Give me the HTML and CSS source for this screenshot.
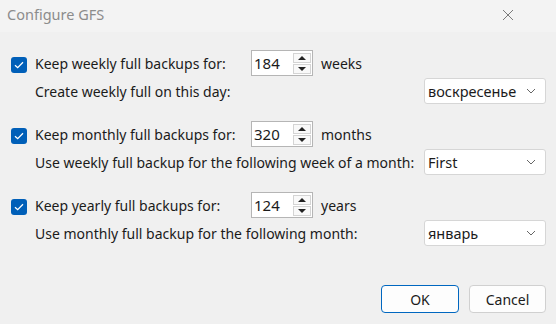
FILE: index.html
```html
<!DOCTYPE html>
<html lang="en">
<head>
    <meta charset="UTF-8">
    <title>Configure GFS</title>
    <link rel="stylesheet" href="styles.css">
</head>
<body>
    <div class="titlebar">
        <span class="title">Configure GFS</span>
        <svg class="close" width="12" height="12" viewBox="0 0 12 12">
            <path d="M1 1 L11 11 M11 1 L1 11" stroke="#7a7a7a" stroke-width="1" fill="none"/>
        </svg>
    </div>

    <main class="content">
        <section class="group">
            <div class="row keep">
                <label class="check">
                    <span class="box"><svg width="10" height="8" viewBox="0 0 10 8"><path d="M1 4.2 L3.7 6.7 L9 1.3" stroke="#fff" stroke-width="1.3" fill="none"/></svg></span>
                    <span class="label">Keep weekly full backups for:</span>
                </label>
                <div class="spin">
                    <span class="value">184</span>
                    <div class="arrows"><span class="arrow up"></span><span class="arrow down"></span></div>
                </div>
                <span class="unit">weeks</span>
            </div>
            <div class="row sub">
                <span class="label">Create weekly full on this day:</span>
                <div class="combo"><span>воскресенье</span><svg width="10" height="6" viewBox="0 0 10 6"><path d="M1 1 L5 5 L9 1" stroke="#666" stroke-width="1" fill="none"/></svg></div>
            </div>
        </section>

        <section class="group">
            <div class="row keep">
                <label class="check">
                    <span class="box"><svg width="10" height="8" viewBox="0 0 10 8"><path d="M1 4.2 L3.7 6.7 L9 1.3" stroke="#fff" stroke-width="1.3" fill="none"/></svg></span>
                    <span class="label">Keep monthly full backups for:</span>
                </label>
                <div class="spin">
                    <span class="value">320</span>
                    <div class="arrows"><span class="arrow up"></span><span class="arrow down"></span></div>
                </div>
                <span class="unit">months</span>
            </div>
            <div class="row sub">
                <span class="label">Use weekly full backup for the following week of a month:</span>
                <div class="combo"><span>First</span><svg width="10" height="6" viewBox="0 0 10 6"><path d="M1 1 L5 5 L9 1" stroke="#666" stroke-width="1" fill="none"/></svg></div>
            </div>
        </section>

        <section class="group">
            <div class="row keep">
                <label class="check">
                    <span class="box"><svg width="10" height="8" viewBox="0 0 10 8"><path d="M1 4.2 L3.7 6.7 L9 1.3" stroke="#fff" stroke-width="1.3" fill="none"/></svg></span>
                    <span class="label">Keep yearly full backups for:</span>
                </label>
                <div class="spin">
                    <span class="value">124</span>
                    <div class="arrows"><span class="arrow up"></span><span class="arrow down"></span></div>
                </div>
                <span class="unit">years</span>
            </div>
            <div class="row sub">
                <span class="label">Use monthly full backup for the following month:</span>
                <div class="combo"><span>январь</span><svg width="10" height="6" viewBox="0 0 10 6"><path d="M1 1 L5 5 L9 1" stroke="#666" stroke-width="1" fill="none"/></svg></div>
            </div>
        </section>
    </main>

    <footer class="actions">
        <button class="button default">OK</button>
        <button class="button">Cancel</button>
    </footer>
</body>
</html>
```

FILE: styles.css
```css
html, body {
    height: 100%;
}

body {
    margin: 0;
    font-family: 'Noto Sans', 'Open Sans', sans-serif;
    font-size: 14px;
    color: #1b1b1b;
    background: #f0f0f0;
    display: flex;
    flex-direction: column;
}

.titlebar {
    height: 32px;
    background: #f3f3f3;
    display: flex;
    align-items: center;
    justify-content: space-between;
    padding: 0 42px 0 7px;
    flex-shrink: 0;
}

.title {
    font-size: 14.5px;
    color: #8c8c8c;
    margin-top: -4px;
}

.close {
    margin-top: -3px;
}

.content {
    padding: 18px 10px 0 11px;
}

.group {
    display: flex;
    flex-direction: column;
    gap: 2px;
    margin-bottom: 17px;
}

.row {
    display: flex;
    align-items: center;
    height: 26px;
}

.check {
    width: 240px;
    display: flex;
    align-items: center;
    gap: 8px;
}

.box {
    width: 16px;
    height: 16px;
    border-radius: 3px;
    background: #005fb8;
    display: flex;
    align-items: center;
    justify-content: center;
    margin-top: 4px;
}

.spin {
    width: 62px;
    height: 26px;
    box-sizing: border-box;
    border: 1px solid #b5b5b5;
    background: #fff;
    display: flex;
    align-items: center;
    justify-content: space-between;
    padding: 0 1px 0 2px;
}

.value {
    font-size: 15px;
}

.arrows {
    width: 18px;
    display: flex;
    flex-direction: column;
    gap: 1px;
}

.arrow {
    height: 10px;
    box-sizing: border-box;
    border: 1px solid #d4d4d4;
    background: #f9f9f9;
    display: flex;
    align-items: center;
    justify-content: center;
}

.arrow::before {
    content: '';
    border-left: 4px solid transparent;
    border-right: 4px solid transparent;
}

.up::before {
    border-bottom: 4px solid #222;
}

.down::before {
    border-top: 4px solid #222;
}

.unit {
    margin-left: 8px;
}

.sub {
    justify-content: space-between;
    padding-left: 24px;
}

.combo {
    width: 122px;
    height: 26px;
    box-sizing: border-box;
    border: 1px solid #d6d6d6;
    border-radius: 3px;
    background: #fff;
    display: flex;
    align-items: center;
    justify-content: space-between;
    padding: 0 9px 0 3px;
    font-size: 14.5px;
}

.actions {
    margin-top: auto;
    display: flex;
    justify-content: flex-end;
    gap: 10px;
    padding: 0 10px 11px 0;
}

.button {
    width: 77px;
    height: 28px;
    font-family: inherit;
    font-size: 14px;
    color: #1b1b1b;
    background: #fdfdfd;
    border: 1px solid #d0d0d0;
    border-radius: 4px;
}

.button.default {
    width: 78px;
    border-color: #0067c0;
}
```
